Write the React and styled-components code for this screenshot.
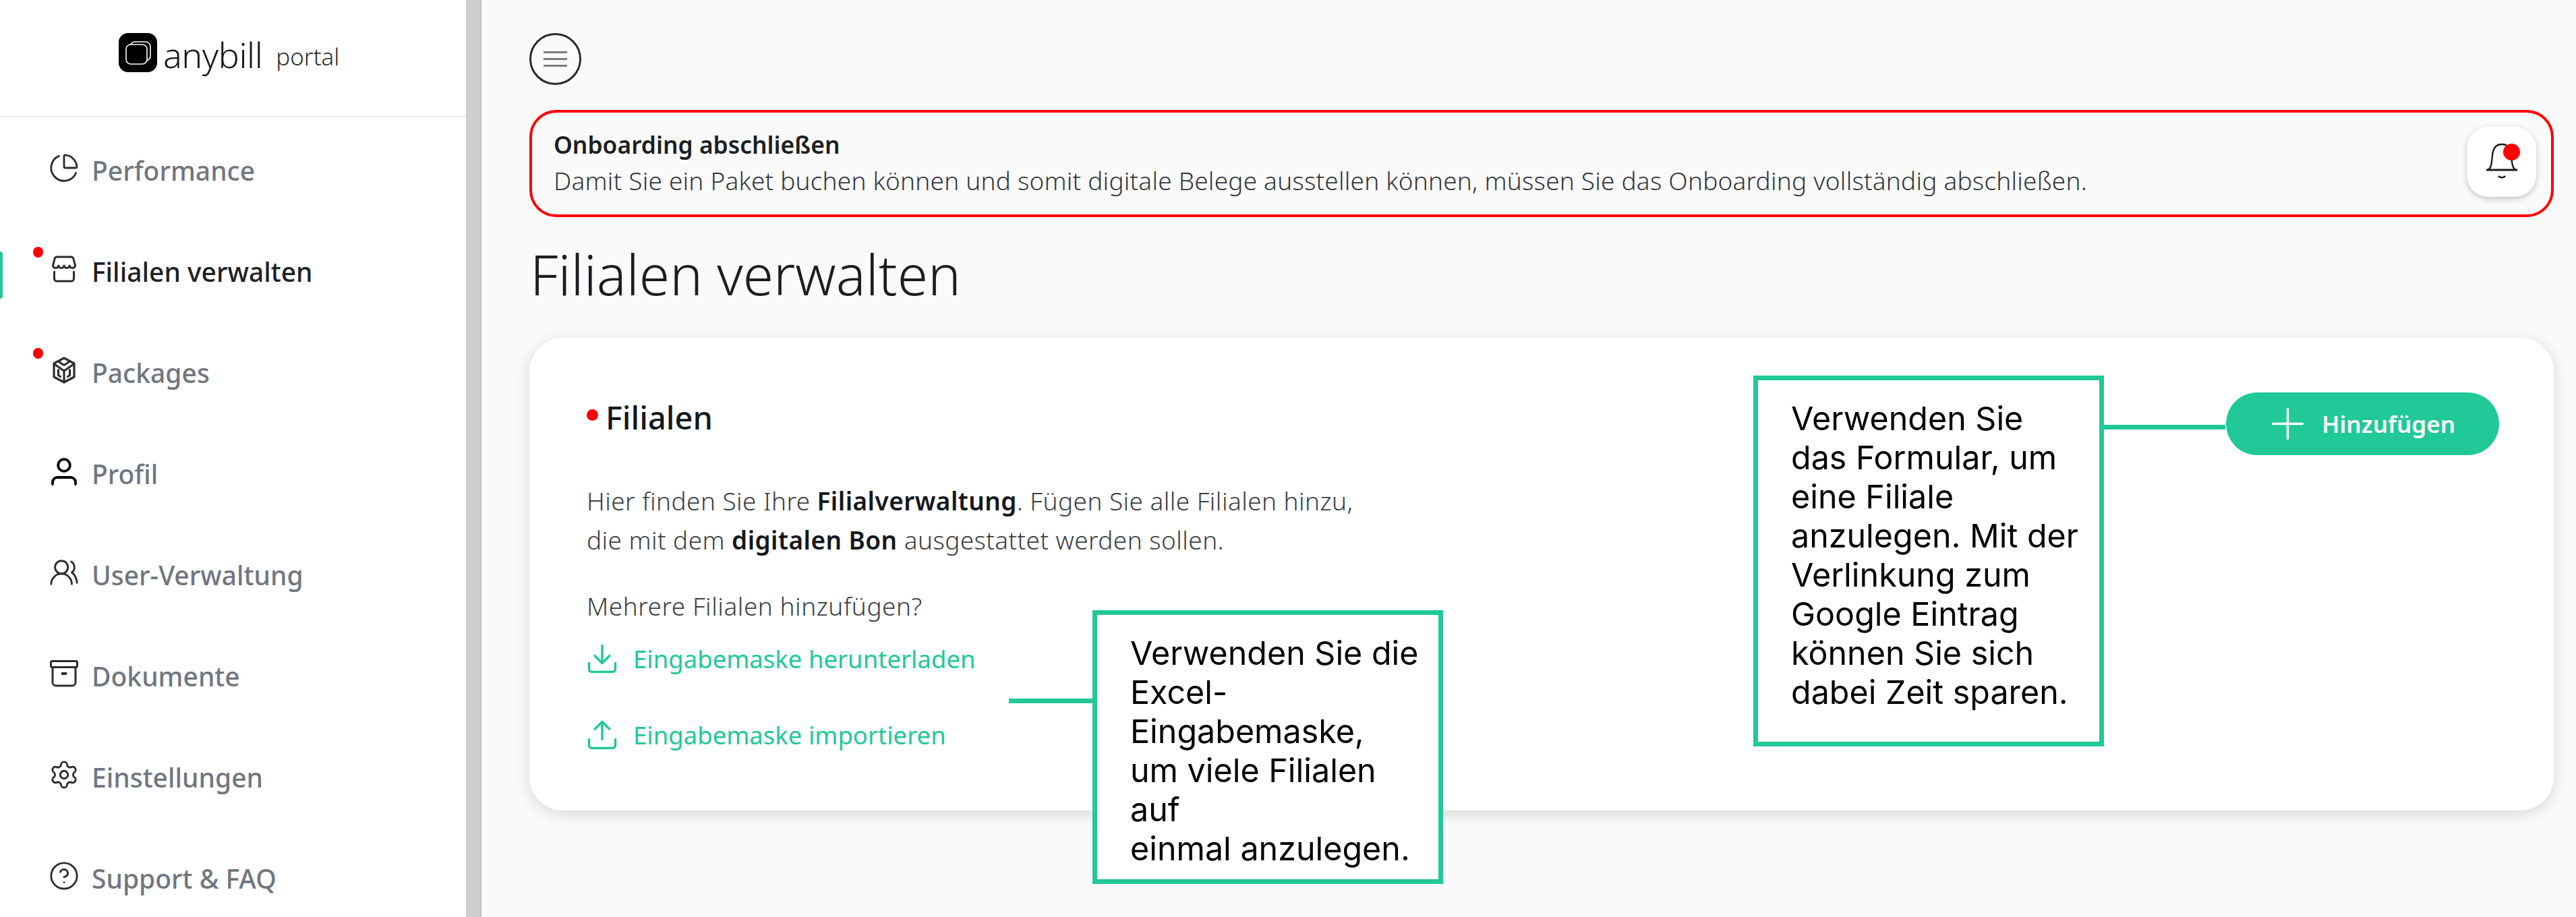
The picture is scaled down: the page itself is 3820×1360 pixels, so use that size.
import React from "react";
import styled, { createGlobalStyle } from "styled-components";
import {
  ChartPie, UsersRound, Settings, CircleHelp, Download, Upload, Plus,
} from "lucide-react";

const Global = createGlobalStyle`
  html, body { margin: 0; padding: 0; background: #fafafa; }
  body { width: 3820px; height: 1360px; overflow: hidden; font-family: "Noto Sans", "Open Sans", sans-serif; }
  * { box-sizing: border-box; }
`;

const Page = styled.div`
  display: flex;
  width: 3820px;
  height: 1360px;
  overflow: hidden;
`;
const Sidebar = styled.aside`
  flex: 0 0 691px;
  height: 1360px;
  background: #fff;
  overflow: hidden;
`;
const Rail = styled.div`
  flex: 0 0 23px;
  background: #cfcfcf;
  border-right: 2px solid #bdbdbd;
  box-shadow: 3px 0 6px rgba(0, 0, 0, 0.04);
`;
const LogoBar = styled.div`
  height: 174px;
  border-bottom: 2px solid #e8e8e8;
  padding: 49px 0 0 176px;
  display: flex;
  align-items: flex-start;
`;
const LogoMark = styled.svg`
  width: 57px;
  height: 58px;
  flex: none;
`;
const LogoWord = styled.span`
  margin-left: 9px;
  font-size: 52px;
  line-height: 64px;
  font-weight: 300;
  color: #17191c;
  letter-spacing: -0.5px;
`;
const LogoSub = styled.span`
  margin-left: 20px;
  font-size: 35px;
  line-height: 70px;
  font-weight: 300;
  color: #2a2d31;
`;
const Nav = styled.nav`
  display: flex;
  flex-direction: column;
`;
const NavItem = styled.div`
  position: relative;
  height: 150px;
  flex: none;
  display: flex;
  align-items: center;
  padding-left: 72px;
  gap: 18px;
  color: ${(p) => (p.$active ? "#1d2126" : "#71767f")};
  font-size: 39px;
  font-weight: 500;
  &::before {
    content: "";
    display: ${(p) => (p.$active ? "block" : "none")};
    position: absolute;
    left: 0;
    top: 49px;
    width: 4px;
    height: 70px;
    border-radius: 0 4px 4px 0;
    background: #20c997;
  }
`;
const NavDot = styled.span`
  position: absolute;
  left: 49px;
  top: 42px;
  width: 15px;
  height: 16px;
  border-radius: 50%;
  background: #ff0000;
`;
const NavIcon = styled.span`
  flex: none;
  width: 46px;
  height: 46px;
  display: flex;
  align-items: center;
  justify-content: center;
  color: ${(p) => p.$color || "#2a2d31"};
`;
const NavLabel = styled.span`
  margin-top: 7px;
`;
const Main = styled.main`
  flex: 1;
  min-width: 0;
  padding: 49px 33px 0 71px;
  background: #fafafa;
`;
const MenuButton = styled.div`
  width: 77px;
  height: 77px;
  border: 3px solid #2a2a2a;
  border-radius: 50%;
  display: flex;
  flex-direction: column;
  align-items: center;
  justify-content: center;
  gap: 7px;
`;
const MenuLine = styled.span`
  width: 35px;
  height: 3px;
  background: #7d7d7d;
`;
const Banner = styled.section`
  margin-top: 37px;
  height: 159px;
  border: 4px solid #ff0000;
  border-radius: 40px;
  padding: 22px 22px 0 32px;
  display: flex;
  justify-content: space-between;
`;
const BannerText = styled.div`
  display: flex;
  flex-direction: column;
`;
const BannerTitle = styled.div`
  font-size: 35.4px;
  line-height: 50px;
  font-weight: 600;
  color: #1c1f23;
`;
const BannerBody = styled.div`
  margin-top: 4px;
  font-size: 37px;
  letter-spacing: 0.2px;
  line-height: 50px;
  font-weight: 300;
  color: #33373c;
  white-space: nowrap;
`;
const BellButton = styled.div`
  position: relative;
  width: 103px;
  height: 104px;
  margin-top: -1px;
  flex: none;
  border-radius: 32px;
  background: #fff;
  box-shadow: 0 3px 8px rgba(0, 0, 0, 0.22);
  display: flex;
  align-items: center;
  justify-content: center;
`;
const BellDot = styled.span`
  position: absolute;
  left: 54px;
  top: 25px;
  width: 25px;
  height: 25px;
  border-radius: 50%;
  background: #ff0000;
`;
const Title = styled.h1`
  margin: 29px 0 0 1px;
  font-size: 82px;
  line-height: 110px;
  font-weight: 300;
  color: #1a1d21;
`;
const Card = styled.section`
  position: relative;
  margin-top: 40px;
  height: 701px;
  background: #fff;
  border-radius: 50px;
  box-shadow: 0 5px 22px rgba(0, 0, 0, 0.14);
  padding: 81px 81px 0 85px;
`;
const CardHead = styled.div`
  display: flex;
  justify-content: space-between;
  align-items: flex-start;
`;
const CardTitle = styled.h2`
  margin: 7px 0 0;
  display: flex;
  align-items: center;
  gap: 11px;
  font-size: 47px;
  line-height: 60px;
  font-weight: 500;
  color: #15181b;
`;
const TitleDot = styled.span`
  width: 17px;
  height: 17px;
  margin-top: -8px;
  border-radius: 50%;
  background: #ff0000;
`;
const AddButton = styled.div`
  width: 405px;
  height: 93px;
  border-radius: 47px;
  background: #20c997;
  color: #fff;
  display: flex;
  align-items: center;
  padding-left: 54px;
  gap: 13px;
  font-size: 35px;
  font-weight: 600;
`;
const Para = styled.p`
  margin: 39px 0 0;
  font-size: 37px;
  letter-spacing: 0.42px;
  line-height: 58px;
  font-weight: 300;
  color: #3a3e43;
  b { font-weight: 600; color: #15181b; }
`;
const Label = styled.div`
  margin-top: 40px;
  font-size: 37px;
  letter-spacing: 0.5px;
  line-height: 58px;
  font-weight: 300;
  color: #3a3e43;
`;
const LinkRow = styled.div`
  height: 58px;
  margin-top: ${(p) => p.$gap}px;
  display: flex;
  align-items: center;
  color: #20c997;
  font-size: 36.5px;
  font-weight: 400;
  gap: 21px;
  svg { margin-left: -3px; margin-right: -1px; }
`;
const Callout = styled.div`
  position: absolute;
  left: ${(p) => p.$x}px;
  top: ${(p) => p.$y}px;
  width: 520px;
  height: ${(p) => p.$h}px;
  background: #fff;
  border: 7px solid #20c997;
  padding: 28px 0 0 49px;
  font-family: Inter, "Liberation Sans", sans-serif;
  font-size: 48.4px;
  line-height: 58px;
  color: #000;
  white-space: nowrap;
  &::before {
    content: "";
    position: absolute;
    top: ${(p) => p.$lineTop}px;
    height: 7px;
    width: ${(p) => p.$lineW}px;
    ${(p) => (p.$side === "left" ? `right: 100%; margin-right: 7px;` : `left: 100%; margin-left: 7px;`)}
    background: #20c997;
  }
`;

const Store = () => (
  <svg width="38" height="40" viewBox="0 0 38 40" fill="none" stroke="currentColor" strokeWidth="3" strokeLinecap="round" strokeLinejoin="round">
    <path d="M2.5 15L5 5a4 4 0 0 1 4-3h20a4 4 0 0 1 4 3l2.5 10" />
    <path d="M2.5 15a4.2 4.2 0 0 0 8.25 0a4.2 4.2 0 0 0 8.25 0a4.2 4.2 0 0 0 8.25 0a4.2 4.2 0 0 0 8.25 0" />
    <path d="M4.5 24v10a4 4 0 0 0 4 4h21a4 4 0 0 0 4-4V24" />
  </svg>
);

const Box = () => (
  <svg width="38" height="40" viewBox="0 0 38 40" fill="none" stroke="currentColor" strokeWidth="3.2" strokeLinejoin="round" strokeLinecap="round">
    <path d="M19 2l15 8v20l-15 8l-15-8V10z" />
    <path d="M12 8l7 4.5L26 8" />
    <path d="M4.5 11L19 21l14.5-10" />
    <path d="M19 21v17" />
    <path d="M10.5 19.5v8l3 2" />
    <path d="M27.5 19.5v8l-3 2" />
  </svg>
);

const Person = () => (
  <svg width="38" height="41" viewBox="0 0 38 41" fill="none" stroke="currentColor" strokeWidth="3.8" strokeLinecap="round">
    <circle cx="19" cy="11" r="8.8" />
    <path d="M2 39v-3a7 7 0 0 1 7-7h20a7 7 0 0 1 7 7v3" />
  </svg>
);

const Archive = () => (
  <svg width="42" height="40" viewBox="0 0 42 40" fill="none" stroke="currentColor" strokeWidth="3">
    <rect x="1.5" y="1.5" width="39" height="9" rx="2" />
    <path d="M4 10.5V33a5 5 0 0 0 5 5h24a5 5 0 0 0 5-5V10.5" />
    <path d="M17 20h8" strokeWidth="4" />
  </svg>
);

const Bell = () => (
  <svg width="48" height="56" viewBox="0 0 48 56" fill="none" stroke="#1a1a1a" strokeWidth="2.4">
    <path d="M1 40h46" strokeWidth="3" />
    <path d="M4 40c4-3 5-9 6-22C11 7 16 2 24 2s13 5 14 16c1 13 2 19 6 22" />
    <path d="M19 49c2 3 8 3 10 0" />
  </svg>
);

const items = [
  { label: "Performance", icon: <ChartPie size={46} strokeWidth={1.5} /> },
  { label: "Filialen verwalten", icon: <Store />, active: true, dot: true },
  { label: "Packages", icon: <Box />, dot: true },
  { label: "Profil", icon: <Person />, color: "#000" },
  { label: "User-Verwaltung", icon: <UsersRound size={46} strokeWidth={1.5} /> },
  { label: "Dokumente", icon: <Archive /> },
  { label: "Einstellungen", icon: <Settings size={46} strokeWidth={1.5} /> },
  { label: "Support & FAQ", icon: <CircleHelp size={46} strokeWidth={1.5} /> },
];

export default function App() {
  return (
    <Page>
      <Global />
      <Sidebar>
        <LogoBar>
          <LogoMark viewBox="0 0 57 58">
            <rect width="57" height="58" rx="14" fill="#000" />
            <rect x="17" y="13" width="30" height="28" rx="7" fill="none" stroke="#fff" strokeWidth="1.6" />
            <rect x="11" y="17" width="31" height="29" rx="7" fill="#000" stroke="#fff" strokeWidth="1.6" />
          </LogoMark>
          <LogoWord>anybill</LogoWord>
          <LogoSub>portal</LogoSub>
        </LogoBar>
        <Nav>
          {items.map((it) => (
            <NavItem key={it.label} $active={it.active}>
              {it.dot && <NavDot />}
              <NavIcon $color={it.color}>{it.icon}</NavIcon>
              <NavLabel>{it.label}</NavLabel>
            </NavItem>
          ))}
        </Nav>
      </Sidebar>
      <Rail />
      <Main>
        <MenuButton>
          <MenuLine />
          <MenuLine />
          <MenuLine />
        </MenuButton>
        <Banner>
          <BannerText>
            <BannerTitle>Onboarding abschließen</BannerTitle>
            <BannerBody>
              Damit Sie ein Paket buchen können und somit digitale Belege ausstellen können, müssen Sie das Onboarding vollständig abschließen.
            </BannerBody>
          </BannerText>
          <BellButton>
            <Bell />
            <BellDot />
          </BellButton>
        </Banner>
        <Title>Filialen verwalten</Title>
        <Card>
          <CardHead>
            <CardTitle>
              <TitleDot />
              Filialen
            </CardTitle>
            <AddButton>
              <Plus size={75} strokeWidth={1.1} />
              Hinzufügen
            </AddButton>
          </CardHead>
          <Para>
            Hier finden Sie Ihre <b>Filialverwaltung</b>. Fügen Sie alle Filialen hinzu,
            <br />
            die mit dem <b>digitalen Bon</b> ausgestattet werden sollen.
          </Para>
          <Label>Mehrere Filialen hinzufügen?</Label>
          <LinkRow $gap={20}>
            <Download size={52} strokeWidth={1.6} />
            Eingabemaske herunterladen
          </LinkRow>
          <LinkRow $gap={55}>
            <Upload size={52} strokeWidth={1.6} />
            Eingabemaske importieren
          </LinkRow>
          <Callout $x={835} $y={404} $h={406} $side="left" $lineW={124} $lineTop={124}>
            Verwenden Sie die
            <br />
            Excel-
            <br />
            Eingabemaske,
            <br />
            um viele Filialen
            <br />
            auf
            <br />
            einmal anzulegen.
          </Callout>
          <Callout $x={1815} $y={56} $h={550} $side="right" $lineW={180} $lineTop={66}>
            Verwenden Sie
            <br />
            das Formular, um
            <br />
            eine Filiale
            <br />
            anzulegen. Mit der
            <br />
            Verlinkung zum
            <br />
            Google Eintrag
            <br />
            können Sie sich
            <br />
            dabei Zeit sparen.
          </Callout>
        </Card>
      </Main>
    </Page>
  );
}
